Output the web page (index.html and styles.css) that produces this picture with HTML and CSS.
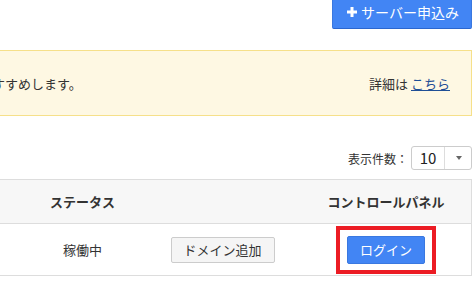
FILE: index.html
```html
<!DOCTYPE html>
<html lang="ja">
<head>
  <meta charset="UTF-8">
  <title>サーバー一覧</title>
  <link rel="stylesheet" href="styles.css">
</head>
<body>

  <div class="top-bar">
    <button class="apply-btn">
      <svg class="plus" width="10" height="10" viewBox="0 0 10 10">
        <path d="M5 0V10M0 5H10" stroke="#fff" stroke-width="3"/>
      </svg>
      サーバー申込み
    </button>
  </div>

  <div class="notice">
    <span class="notice-text">バックアップの設定をおすすめします。</span>
    <span class="notice-link">詳細は <a href="#">こちら</a></span>
  </div>

  <div class="list-tools">
    <span class="count-label">表示件数：</span>
    <div class="count-select">
      <span class="count-value">10</span>
      <span class="count-arrow"></span>
    </div>
  </div>

  <table class="server-table">
    <thead>
      <tr>
        <th class="col-status">ステータス</th>
        <th class="col-domain"></th>
        <th class="col-panel">コントロールパネル</th>
      </tr>
    </thead>
    <tbody>
      <tr>
        <td class="col-status">稼働中</td>
        <td class="col-domain"><button class="domain-btn">ドメイン追加</button></td>
        <td class="col-panel">
          <span class="highlight"><button class="login-btn">ログイン</button></span>
        </td>
      </tr>
    </tbody>
  </table>

</body>
</html>
```

FILE: styles.css
```css
body {
  margin: 0;
  font-family: "Noto Sans CJK JP", "Noto Sans", sans-serif;
  font-size: 13px;
  color: #333;
  background: #fff;
  overflow: hidden;
}
.top-bar {
  display: flex;
  justify-content: flex-end;
  padding-right: 3px;
  height: 29px;
}
.apply-btn {
  margin-top: -5px;
  height: 34px;
  width: 140px;
  background: #4285f4;
  color: #fff;
  border: 1px solid #3a78e0;
  border-bottom-color: #2a66cf;
  border-radius: 2px;
  font-family: inherit;
  font-size: 14px;
  padding: 0 0 0 2px;
  display: flex;
  align-items: center;
  justify-content: center;
  gap: 4px;
}
.plus {
  display: block;
}
.notice {
  margin: 21px 3px 0 -152px;
  height: 64px;
  background: #fef8e3;
  border: 1px solid #f6e08a;
  display: flex;
  align-items: center;
  justify-content: space-between;
  padding: 0 21px 0 0;
}
.notice-link a {
  color: #1f4f96;
  text-decoration: underline;
}
.list-tools {
  margin-top: 30px;
  display: flex;
  justify-content: flex-end;
  align-items: center;
  padding-right: 3px;
}
.count-label {
  font-size: 12px;
  margin-right: 3px;
}
.count-select {
  display: flex;
  height: 22px;
  width: 59px;
  border: 1px solid #ccc;
  border-radius: 3px;
}
.count-value {
  width: 32px;
  border-right: 1px solid #ddd;
  font-size: 15px;
  color: #222;
  text-align: center;
  line-height: 22px;
}
.count-arrow {
  flex: 1;
  position: relative;
}
.count-arrow::after {
  content: "";
  position: absolute;
  left: 11px;
  top: 9px;
  border-left: 3px solid transparent;
  border-right: 3px solid transparent;
  border-top: 4px solid #666;
}
.server-table {
  margin-top: 9px;
  margin-left: -1px;
  width: 473px;
  border-collapse: collapse;
  border: 1px solid #ddd;
}
.server-table th {
  background: #f7f7f7;
  height: 43px;
  font-weight: bold;
  font-size: 13px;
  border-bottom: 1px solid #ddd;
  padding: 0;
}
.server-table td {
  height: 51px;
  padding: 0;
  text-align: center;
}
.col-status {
  width: 165px;
}
.col-domain {
  width: 118px;
}
.col-panel {
  padding-left: 18px !important;
  text-align: center;
}
.domain-btn {
  height: 26px;
  width: 104px;
  margin-left: -3px;
  background: #f5f5f5;
  border: 1px solid #ccc;
  border-radius: 2px;
  font-family: inherit;
  font-size: 13px;
  color: #333;
  padding: 0;
}
.highlight {
  display: inline-block;
  border: 4px solid #ec1c24;
  padding: 6px 7px;
  line-height: 0;
}
.login-btn {
  height: 28px;
  width: 78px;
  background: #4285f4;
  border: 1px solid #3a78e0;
  border-radius: 2px;
  color: #fff;
  font-family: inherit;
  font-size: 13px;
  padding: 0;
}
```
